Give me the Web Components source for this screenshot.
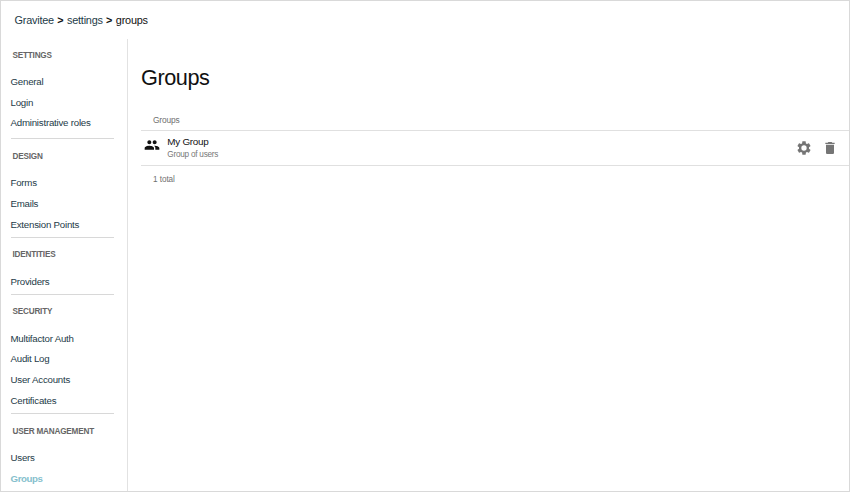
<!DOCTYPE html>
<html lang="en"><head><meta charset="utf-8"><title>Groups</title>
<style>
html,body{margin:0;background:#fff}
body{font-family:"Liberation Sans",Arial,sans-serif;overflow:hidden}
</style></head><body>
<settings-page></settings-page>
<script>
const define=(name,html,init)=>customElements.define(name,class extends HTMLElement{
  connectedCallback(){
    if(this.shadowRoot)return;
    const t=document.createElement('template');t.innerHTML=html;
    this.attachShadow({mode:'open'}).append(t.content.cloneNode(true));
    if(init)init(this);
  }
});
define('bread-crumb',`<style>
:host{display:flex;align-items:center;height:38.4px;padding:.2px 0 0 13.5px;font-size:10.9px;letter-spacing:-.22px;line-height:14px;color:#1d3a47;white-space:pre;box-sizing:border-box}
b{color:#111;font-weight:700;font-size:10.8px;letter-spacing:.25px} .now{color:#111}
</style><span>Gravitee</span><b> &gt; </b><span>settings</span><b> &gt; </b><span class="now">groups</span>`);
define('nav-item',`<style>
:host{display:flex;align-items:center;height:20.8px;font-size:9.7px;letter-spacing:-.22px;color:#1d3a47;white-space:nowrap}
:host([active]){color:#86bfcd;font-weight:700;letter-spacing:-.4px}
</style><span><slot></slot></span>`);
define('nav-section',`<style>
:host{display:block;padding-bottom:2.5px;border-bottom:1px solid #d8d8d8}
:host([first]){padding-bottom:5.1px}
:host([last]){border:0}
h2{margin:0;padding:12.5px 0 10.2px 2px;font-size:8.2px;letter-spacing:-.21px;line-height:10px;font-weight:700;color:#666;white-space:nowrap}
</style><h2></h2><slot></slot>`,el=>el.shadowRoot.querySelector('h2').textContent=el.getAttribute('heading'));
define('side-nav',`<style>
:host{display:block;box-sizing:border-box;width:127px;padding:0 13px 0 9.5px;border-right:1px solid #e2e2e2}
.in{margin-top:-1.2px}
</style><div class="in"><slot></slot></div>`);
const icons={
 people:'M16 11c1.66 0 2.99-1.34 2.99-3S17.66 5 16 5s-3 1.34-3 3 1.34 3 3 3zm-8 0c1.66 0 2.99-1.34 2.99-3S9.66 5 8 5 5 6.34 5 8s1.34 3 3 3zm0 2c-2.33 0-7 1.17-7 3.5V19h14v-2.5c0-2.33-4.67-3.5-7-3.5zm8 0c-.29 0-.62.02-.97.05 1.16.84 1.97 1.97 1.97 3.45V19h6v-2.5c0-2.33-4.67-3.5-7-3.5z',
 gear:'M19.43 12.98c.04-.32.07-.64.07-.98s-.03-.66-.07-.98l2.11-1.65c.19-.15.24-.42.12-.64l-2-3.46c-.12-.22-.39-.3-.61-.22l-2.49 1c-.52-.4-1.08-.73-1.69-.98l-.38-2.65C14.46 2.18 14.25 2 14 2h-4c-.25 0-.46.18-.49.42l-.38 2.65c-.61.25-1.17.59-1.69.98l-2.49-1c-.23-.09-.49 0-.61.22l-2 3.46c-.13.22-.07.49.12.64l2.11 1.65c-.04.32-.07.65-.07.98s.03.66.07.98l-2.11 1.65c-.19.15-.24.42-.12.64l2 3.46c.12.22.39.3.61.22l2.49-1c.52.4 1.08.73 1.69.98l.38 2.65c.03.24.24.42.49.42h4c.25 0 .46-.18.49-.42l.38-2.65c.61-.25 1.17-.59 1.69-.98l2.49 1c.23.09.49 0 .61-.22l2-3.46c.12-.22.07-.49-.12-.64l-2.11-1.65zM12 16a4 4 0 1 1 0-8 4 4 0 0 1 0 8z',
 trash:'M6 19c0 1.1.9 2 2 2h8c1.1 0 2-.9 2-2V7H6v12zM19 4h-3.5l-1-1h-5l-1 1H5v2h14V4z'};
define('ui-icon',`<style>:host{display:block;width:16px;height:16px;flex:none}svg{display:block;width:100%;height:100%;fill:currentColor}</style><svg viewBox="0 0 24 24"><path/></svg>`,
 el=>el.shadowRoot.querySelector('path').setAttribute('d',icons[el.getAttribute('name')]));
define('group-row',`<style>
:host{display:flex;box-sizing:border-box;height:36px;border:solid #e0e0e0;border-width:1px 0}
.lead{margin:6px 7.3px 0 3px;color:#111}
.text{flex:1;padding-top:4px}
.name{font-size:9.9px;letter-spacing:-.27px;line-height:14px;color:#111}
.desc{font-size:8.2px;letter-spacing:-.23px;line-height:12px;color:#777}
.act{display:flex;gap:10px;padding:9px 11px 0 0;color:#757575}
</style><ui-icon class="lead" name="people"></ui-icon>
<div class="text"><div class="name"><slot name="name"></slot></div><div class="desc"><slot name="desc"></slot></div></div>
<div class="act"><ui-icon name="gear"></ui-icon><ui-icon name="trash"></ui-icon></div>`);
define('group-list',`<style>
:host{display:block;flex:1;padding-left:13px}
h1{margin:24px 0 0;font-size:21.7px;letter-spacing:-.45px;line-height:30px;font-weight:400;color:#111}
.cap{padding:22px 0 0 12px;height:15px;line-height:10px;font-size:8.4px;letter-spacing:-.15px;color:#707070}
.total{padding:9px 0 0 12px;line-height:10px;font-size:8.2px;letter-spacing:-.07px;color:#707070}
</style><h1>Groups</h1><div class="cap">Groups</div>
<group-row><span slot="name">My Group</span><span slot="desc">Group of users</span></group-row>
<div class="total">1 total</div>`);
define('settings-page',`<style>
:host{display:flex;flex-direction:column;box-sizing:border-box;width:850px;height:492px;border:1px solid #d9d9d9;overflow:hidden}
.body{display:flex;flex:1;min-height:0}
</style><bread-crumb></bread-crumb><div class="body"><side-nav>
<nav-section first heading="SETTINGS"><nav-item>General</nav-item><nav-item>Login</nav-item><nav-item>Administrative roles</nav-item></nav-section>
<nav-section heading="DESIGN"><nav-item>Forms</nav-item><nav-item>Emails</nav-item><nav-item>Extension Points</nav-item></nav-section>
<nav-section heading="IDENTITIES"><nav-item>Providers</nav-item></nav-section>
<nav-section heading="SECURITY"><nav-item>Multifactor Auth</nav-item><nav-item>Audit Log</nav-item><nav-item>User Accounts</nav-item><nav-item>Certificates</nav-item></nav-section>
<nav-section last heading="USER MANAGEMENT"><nav-item>Users</nav-item><nav-item active>Groups</nav-item></nav-section>
</side-nav><group-list></group-list></div>`);
</script></body></html>
